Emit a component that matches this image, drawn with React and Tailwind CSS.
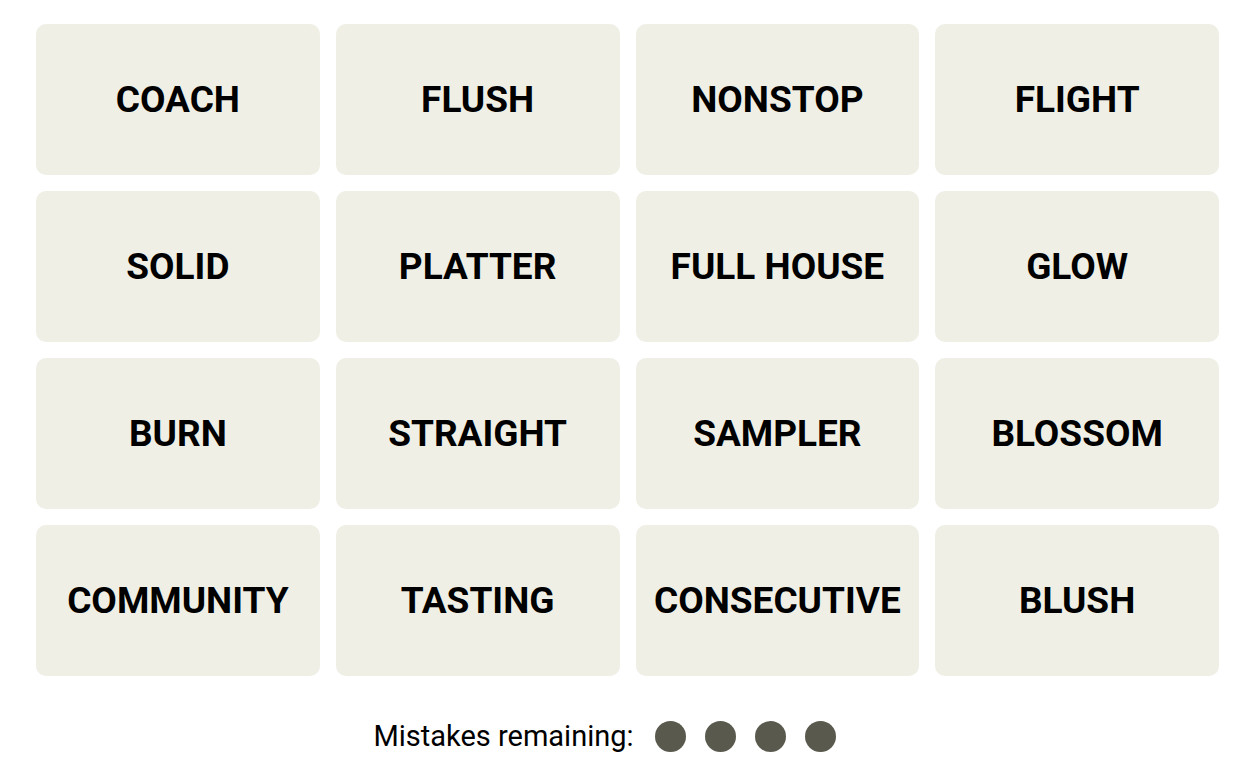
import React from 'react';

const words = [
  'COACH', 'FLUSH', 'NONSTOP', 'FLIGHT',
  'SOLID', 'PLATTER', 'FULL HOUSE', 'GLOW',
  'BURN', 'STRAIGHT', 'SAMPLER', 'BLOSSOM',
  'COMMUNITY', 'TASTING', 'CONSECUTIVE', 'BLUSH',
];

const App = () => {
  return (
    <div className="w-[1250px] h-[777px] bg-white pl-[36px] pr-[31px] pt-[24px] font-['Roboto',sans-serif]">
      <div className="grid grid-cols-4 gap-x-[16px] gap-y-[16px]">
        {words.map((w) => (
          <div
            key={w}
            className="h-[151px] rounded-[10px] bg-[#efefe6] flex items-center justify-center text-[37px] font-bold text-black"
          >
            {w}
          </div>
        ))}
      </div>

      {/* Mistakes remaining */}
      <div className="mt-[39px] pr-[46px] flex items-center justify-center gap-[21px]">
        <span className="text-[29px] text-black">Mistakes remaining:</span>
        <div className="flex gap-[19px]">
          {[0, 1, 2, 3].map((i) => (
            <div key={i} className="w-[31px] h-[31px] rounded-full bg-[#5a594e]" />
          ))}
        </div>
      </div>
    </div>
  );
};

export default App;
